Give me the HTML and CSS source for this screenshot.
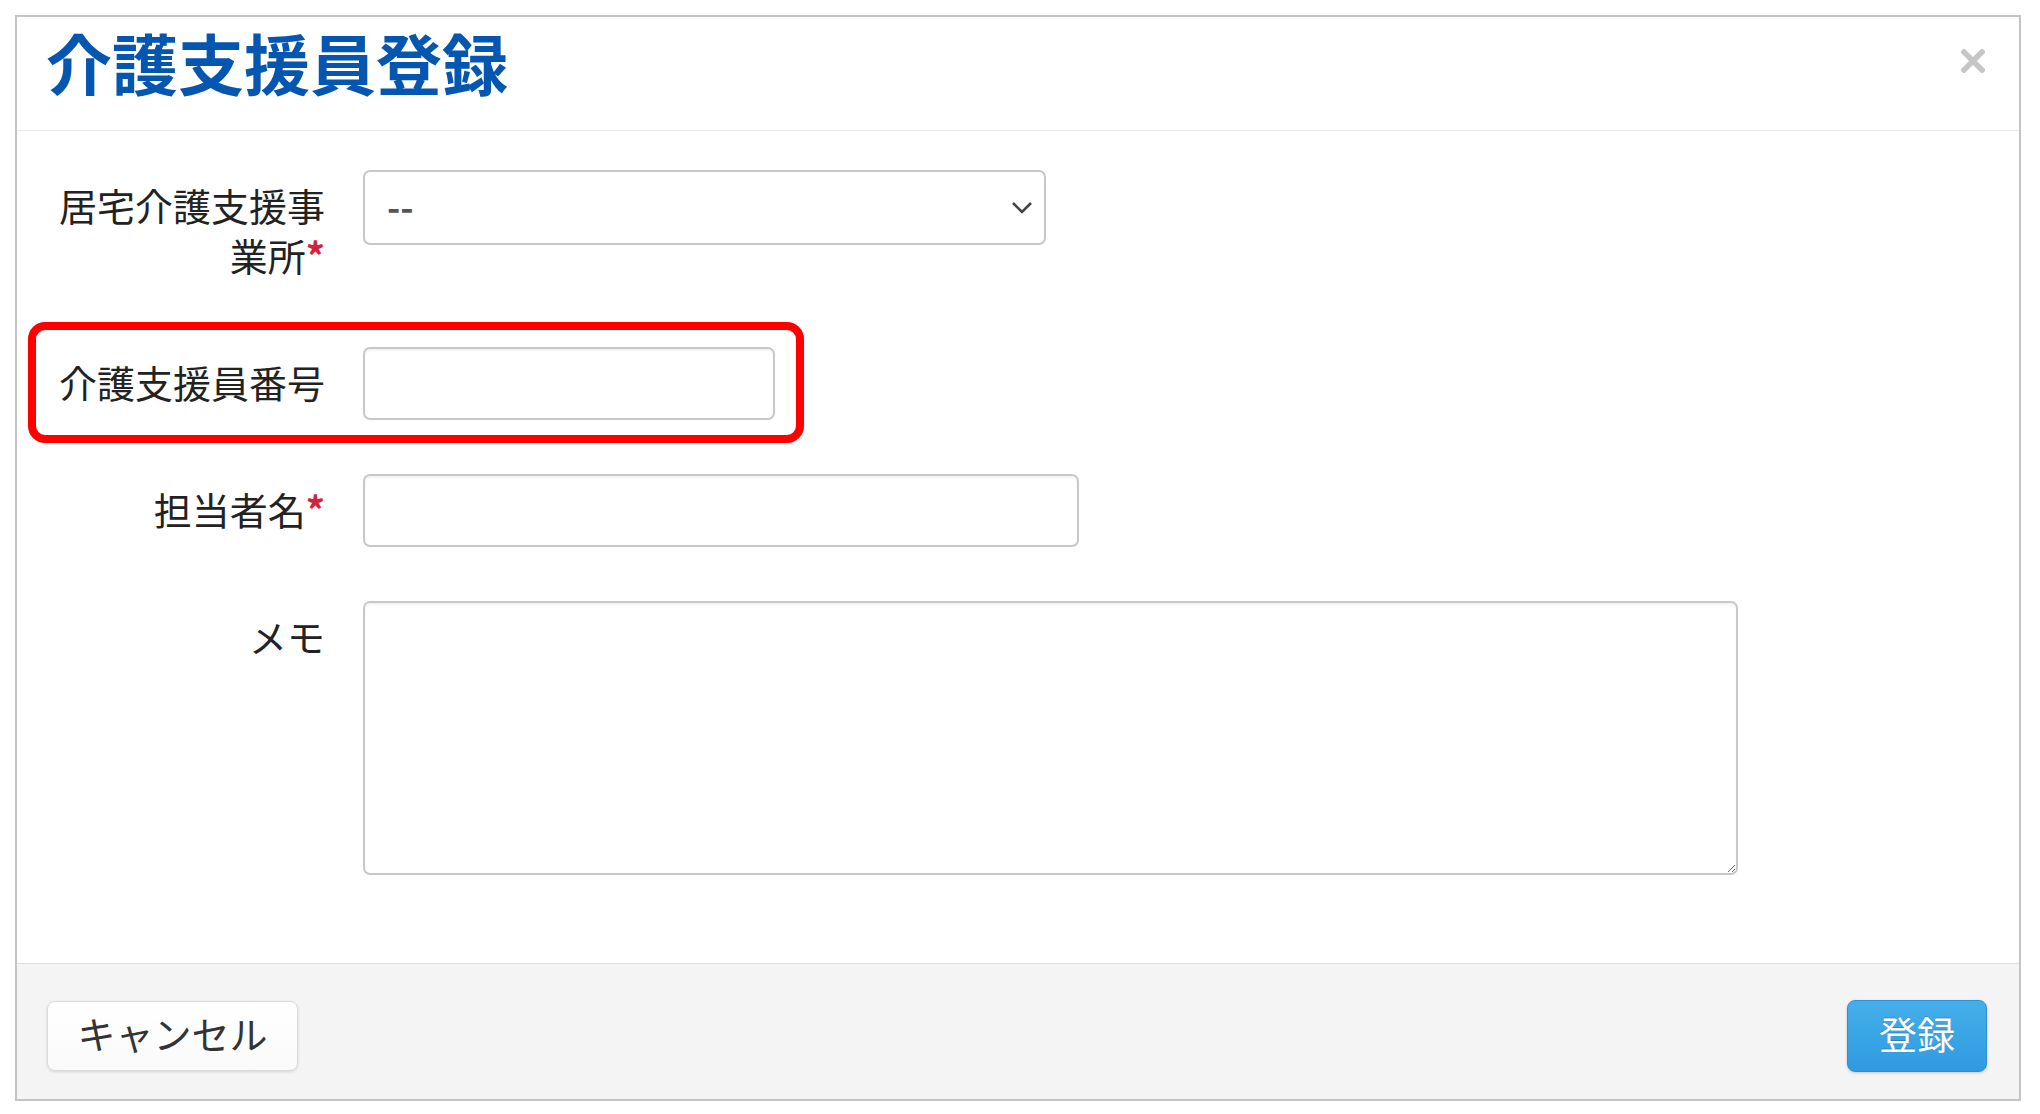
FILE: index.html
```html
<!DOCTYPE html>
<html lang="ja">
<head>
<meta charset="utf-8">
<title>介護支援員登録</title>
<link rel="stylesheet" href="styles.css">
</head>
<body>
<div class="modal">
  <div class="modal-header">
    <h1 class="modal-title">介護支援員登録</h1>
    <button class="close" type="button" aria-label="close">
      <svg width="24" height="24" viewBox="0 0 24 24"><path d="M3 3 L21 21 M21 3 L3 21" stroke="#c6c6c6" stroke-width="5.5" stroke-linecap="square" fill="none"/></svg>
    </button>
  </div>
  <div class="modal-body">
    <div class="form-row">
      <label class="form-label">居宅介護支援事<span class="nowrap">業所<span class="req">*</span></span></label>
      <div class="select-wrap">
        <select class="ctl select"><option>--</option></select>
        <svg class="chev" width="22" height="14" viewBox="0 0 22 14"><path d="M2 2 L11 11 L20 2" stroke="#444" stroke-width="2.6" fill="none"/></svg>
      </div>
    </div>
    <div class="form-row highlighted">
      <span class="highlight"></span>
      <label class="form-label">介護支援員番号</label>
      <input class="ctl input-short" type="text">
    </div>
    <div class="form-row">
      <label class="form-label">担当者名<span class="req">*</span></label>
      <input class="ctl input-mid" type="text">
    </div>
    <div class="form-row">
      <label class="form-label">メモ</label>
      <textarea class="ctl memo"></textarea>
    </div>
  </div>
  <div class="modal-footer">
    <button class="btn" type="button">キャンセル</button>
    <button class="btn btn-primary" type="button">登録</button>
  </div>
</div>
</body>
</html>
```

FILE: styles.css
```css
* { box-sizing: border-box; }

html, body {
  margin: 0;
  padding: 0;
  background: #ffffff;
}

body {
  font-family: "Noto Sans CJK JP", "Noto Sans", sans-serif;
  color: #222;
}

.modal {
  margin: 15px 0 0 15px;
  width: 2006px;
  border: 2px solid #c4c4c4;
  background: #fff;
}

.modal-header {
  display: flex;
  justify-content: space-between;
  align-items: flex-start;
  padding: 4px 34px 29px 29px;
  border-bottom: 1px solid #e8e8e8;
}

.modal-title {
  margin: 0;
  font-size: 66px;
  line-height: 80px;
  font-weight: 700;
  color: #0556b0;
}

.close {
  margin-top: 28px;
  padding: 0;
  border: 0;
  background: transparent;
  width: 24px;
  height: 24px;
  display: block;
}

.close svg { display: block; }

.modal-body {
  display: flex;
  flex-direction: column;
  gap: 54px;
  padding: 39px 40px 88px 40px;
}

.form-row {
  display: flex;
  align-items: flex-start;
  gap: 38px;
}

.highlighted { position: relative; }

.highlight {
  position: absolute;
  top: -25px;
  left: -29px;
  width: 776px;
  height: 121px;
  border: 8px solid #ff0000;
  border-radius: 17px;
}

.form-label {
  flex: 0 0 268px;
  width: 268px;
  text-align: right;
  font-size: 38px;
  line-height: 50px;
  padding: 10px 0 13px;
  color: #222;
}

.nowrap { white-space: nowrap; }

.req {
  color: #d2233c;
  font-weight: 700;
}

.ctl {
  display: block;
  font-family: "Noto Sans CJK JP", "Noto Sans", sans-serif;
  font-size: 36px;
  color: #555;
  background: #fff;
  border: 2px solid #c8c8c8;
  border-radius: 7px;
  box-shadow: inset 0 2px 2px rgba(0,0,0,0.05);
  outline: none;
}

.select-wrap {
  position: relative;
  width: 683px;
  height: 75px;
}

.select {
  appearance: none;
  -webkit-appearance: none;
  width: 100%;
  height: 100%;
  padding: 0 60px 6px 22px;
  font-weight: 700;
  color: #555;
  box-shadow: none;
}

.chev {
  position: absolute;
  right: 13px;
  top: 31px;
  pointer-events: none;
}

.input-short {
  width: 412px;
  height: 73px;
}

.input-mid {
  width: 716px;
  height: 73px;
}

.memo {
  width: 1375px;
  height: 274px;
  resize: both;
}

.modal-footer {
  display: flex;
  justify-content: space-between;
  align-items: center;
  padding: 36px 32px 27px 30px;
  background: #f4f4f4;
  border-top: 1px solid #dedede;
}

.btn {
  height: 70px;
  padding: 0 29px 6px;
  font-family: "Noto Sans CJK JP", "Noto Sans", sans-serif;
  font-size: 38px;
  line-height: 1;
  color: #333;
  background: linear-gradient(#ffffff, #fafafa);
  border: 1px solid #dadada;
  border-radius: 8px;
  box-shadow: 0 1px 3px rgba(0,0,0,0.12);
  width: 251px;
}

.btn-primary {
  width: 140px;
  height: 72px;
  color: #fff;
  background: linear-gradient(#45afea, #2f9be0);
  border: 1px solid #2b91d4;
  text-shadow: 0 -1px 0 rgba(0,0,0,0.2);
  box-shadow: 0 1px 3px rgba(0,0,0,0.18);
}
```
